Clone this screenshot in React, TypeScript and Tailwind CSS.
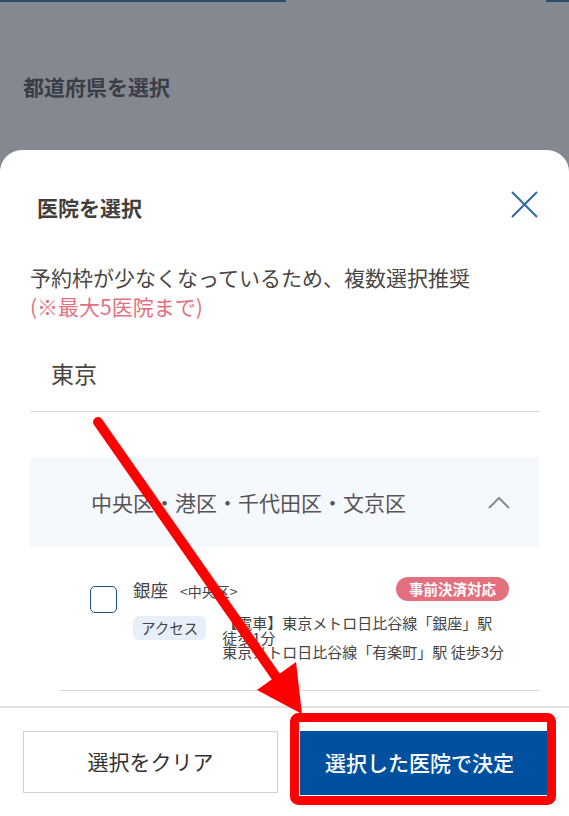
const font = { fontFamily: '"Noto Sans CJK JP", "Noto Sans", sans-serif' }

export default function App() {
  return (
    <div className="relative h-[816px] w-[569px] overflow-hidden bg-[#848891]" style={font}>
      {/* page behind the overlay */}
      <div className="flex h-[150px] flex-col">
        <div className="flex justify-between">
          <div className="h-[2px] w-[286px] bg-[#2f4a6b]" />
          <div className="h-[2px] w-[23px] bg-[#2f4a6b]" />
        </div>
        <p className="mt-[69px] pl-[23px] text-[21px] font-bold leading-[30px] text-[#3a3d44]">
          都道府県を選択
        </p>
      </div>

      {/* bottom sheet */}
      <div className="flex h-[666px] flex-col rounded-t-[22px] bg-white">
        <div className="flex-1 overflow-hidden px-[30px] pt-[41px]">
          <div className="flex items-start justify-between">
            <h2 className="ml-[7px] mt-[1px] text-[21px] font-bold leading-[30px] text-[#433e3a]">
              医院を選択
            </h2>
            <svg width="27" height="27" viewBox="0 0 27 27" className="mr-[1px]">
              <path d="M1 1 L26 26 M26 1 L1 26" stroke="#2a68a6" strokeWidth="2" fill="none" />
            </svg>
          </div>

          <div className="mt-[41px] text-[21px] leading-[29px] text-[#4a4643]">
            <p>予約枠が少なくなっているため、複数選択推奨</p>
            <p className="text-[#e3707f]">(※最大5医院まで)</p>
          </div>

          <div className="mt-[36px] border-b border-[#d6d6d6] pb-[22px] pl-[21px] text-[23px] leading-[32px] text-[#4a4540]">
            東京
          </div>

          <div className="mt-[45px] flex h-[90px] items-center justify-between bg-[#f5f9fd] pl-[61px] pr-[29px]">
            <span className="text-[21px] leading-[30px] text-[#555]">
              中央区・港区・千代田区・文京区
            </span>
            <svg width="22" height="13" viewBox="0 0 22 13">
              <path d="M1 12 L11 2 L21 12" stroke="#8a8a8a" strokeWidth="2" fill="none" />
            </svg>
          </div>

          <div className="ml-[30px] mt-[30px] border-b border-[#d6d6d6] pb-[30px] pl-[30px] pr-[30px]">
            <div className="flex items-start gap-[16px]">
              <div className="mt-[9px] h-[27px] w-[27px] shrink-0 rounded-[5px] border-[1.5px] border-[#1e4f86] bg-white" />
              <div className="flex-1">
                <div className="flex items-start justify-between">
                  <div className="flex items-baseline text-[#444]">
                    <span className="text-[17.5px] leading-[26px]">銀座</span>
                    <span className="ml-[12px] text-[14px]">&lt;中央区&gt;</span>
                  </div>
                  <span className="flex h-[24px] items-center rounded-full bg-[#e3707f] px-[13px] text-[14.5px] font-bold text-white">
                    事前決済対応
                  </span>
                </div>
                <div className="mt-[13px] flex items-start gap-[16px]">
                  <span className="flex h-[24px] shrink-0 items-center rounded-md bg-[#e6effa] px-[8px] text-[14.5px] text-[#444]">
                    アクセス
                  </span>
                  <p className="w-[290px] text-[15px] leading-[14.5px] text-[#444]">
                    【電車】東京メトロ日比谷線「銀座」駅 徒歩1分
                    <br />
                    東京メトロ日比谷線「有楽町」駅 徒歩3分
                  </p>
                </div>
              </div>
            </div>
          </div>
        </div>

        <div className="flex h-[110px] shrink-0 gap-[22px] border-t-2 border-[#e2e2e2] pl-[23px] pt-[23px]">
          <button className="flex h-[62px] w-[255px] items-center justify-center border border-[#d2d2d2] bg-white text-[21px] text-[#333]">
            選択をクリア
          </button>
          <button className="flex h-[64px] w-[255px] items-center justify-center bg-[#0050a0] pr-[16px] text-[21px] font-medium text-white">
            選択した医院で決定
          </button>
        </div>
      </div>

      {/* annotation */}
      <svg
        className="pointer-events-none absolute left-0 top-0"
        width="569"
        height="816"
        viewBox="0 0 569 816"
      >
        <line x1="98" y1="422" x2="281" y2="684" stroke="#ff0000" strokeWidth="10" strokeLinecap="round" />
        <polygon points="257,690 296,662 302,714" fill="#ff0000" />
        <rect x="294.5" y="717.5" width="257" height="83" rx="4" fill="none" stroke="#ff0000" strokeWidth="9" />
      </svg>
    </div>
  )
}
